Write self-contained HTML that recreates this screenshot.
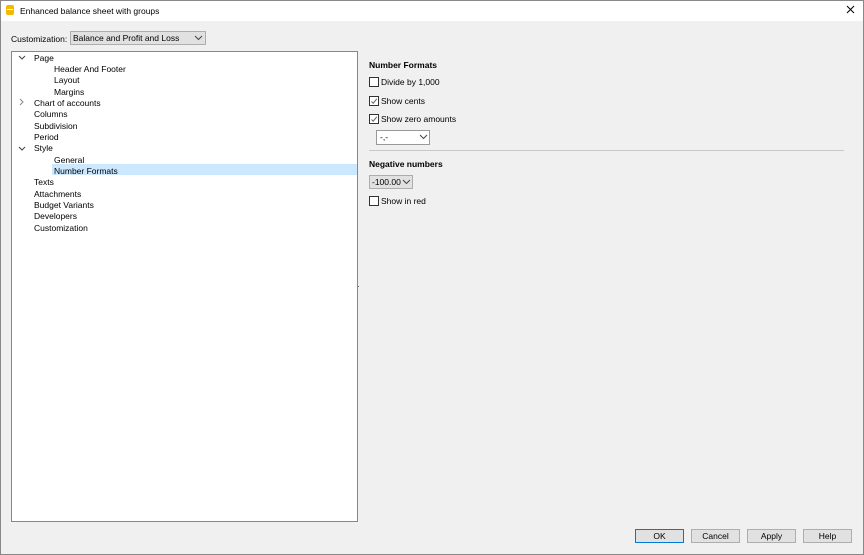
<!DOCTYPE html><html><head><style>
body{margin:0;width:864px;height:555px;overflow:hidden;font-family:"Liberation Sans",sans-serif;font-size:8.5px;color:#000;}
.win{position:absolute;left:0;top:0;width:864px;height:555px;box-shadow:inset 0 0 0 1px #888;background:#f0f0f0;}
.title{position:absolute;left:1px;top:1px;width:862px;height:20px;background:#fff;}
.a{position:absolute;white-space:nowrap;}
.tree{position:absolute;left:11px;top:51px;width:345px;height:469px;background:#fff;border:1px solid #828790;}
.cb{position:absolute;width:8px;height:8px;border:1px solid #333;background:#fff;}
.btn{position:absolute;top:529px;width:47px;height:12px;border:1px solid #adadad;background:#e1e1e1;text-align:center;line-height:12px;}
.dd{position:absolute;border:1px solid #adadad;background:#e1e1e1;}
.ck{position:absolute;}
</style></head><body><div class="win">
<div class="title"></div>
<div class="a" style="left:6px;top:5px;width:8px;height:10px;background:#f5b800;border-radius:2px"></div>
<div class="a" style="left:7px;top:9px;width:6px;height:1px;background:#fff"></div>
<div class="a" style="left:20px;top:6px">Enhanced balance sheet with groups</div>
<svg class="a" style="left:846px;top:5px" width="9" height="9"><path d="M1 1L8 8M8 1L1 8" stroke="#000" stroke-width="1"/></svg>
<div class="a" style="left:11px;top:34px">Customization:</div>
<div class="dd" style="left:70px;top:31px;width:134px;height:12px"><span class="a" style="left:2px;top:1px">Balance and Profit and Loss</span><svg class="a" style="left:123px;top:3px" width="9" height="6"><path d="M1 1L4.5 4.5L8 1" fill="none" stroke="#444"/></svg></div>
<div class="tree">
<div class="a" style="left:40px;top:112px;width:305px;height:11px;background:#cce8ff"></div>
<svg class="a" style="left:6px;top:3px" width="8" height="6"><path d="M1 1L4 4L7 1" fill="none" stroke="#444"/></svg>
<svg class="a" style="left:7px;top:46px" width="6" height="8"><path d="M1 1L4 4L1 7" fill="none" stroke="#888"/></svg>
<svg class="a" style="left:6px;top:94px" width="8" height="6"><path d="M1 1L4 4L7 1" fill="none" stroke="#444"/></svg>
<div class="a" style="left:22px;top:1px">Page</div>
<div class="a" style="left:42px;top:12px">Header And Footer</div>
<div class="a" style="left:42px;top:23px">Layout</div>
<div class="a" style="left:42px;top:35px">Margins</div>
<div class="a" style="left:22px;top:46px">Chart of accounts</div>
<div class="a" style="left:22px;top:57px">Columns</div>
<div class="a" style="left:22px;top:69px">Subdivision</div>
<div class="a" style="left:22px;top:80px">Period</div>
<div class="a" style="left:22px;top:91px">Style</div>
<div class="a" style="left:42px;top:103px">General</div>
<div class="a" style="left:42px;top:114px">Number Formats</div>
<div class="a" style="left:22px;top:125px">Texts</div>
<div class="a" style="left:22px;top:137px">Attachments</div>
<div class="a" style="left:22px;top:148px">Budget Variants</div>
<div class="a" style="left:22px;top:159px">Developers</div>
<div class="a" style="left:22px;top:171px">Customization</div>
</div>
<div class="a" style="left:369px;top:60px;font-weight:bold">Number Formats</div>
<div class="cb" style="left:369px;top:77px"></div><div class="a" style="left:381px;top:77px">Divide by 1,000</div>
<div class="cb" style="left:369px;top:96px"></div><svg class="ck" style="left:370px;top:97px" width="8" height="8"><path d="M1.5 4.5L3.2 6.2L6.8 1.8" fill="none" stroke="#666"/></svg><div class="a" style="left:381px;top:96px">Show cents</div>
<div class="cb" style="left:369px;top:114px"></div><svg class="ck" style="left:370px;top:115px" width="8" height="8"><path d="M1.5 4.5L3.2 6.2L6.8 1.8" fill="none" stroke="#666"/></svg><div class="a" style="left:381px;top:114px">Show zero amounts</div>
<div class="a" style="left:376px;top:130px;width:52px;height:13px;border:1px solid #999;background:#fff"><span class="a" style="left:3px;top:1px">-,-</span><svg class="a" style="left:42px;top:3px" width="9" height="6"><path d="M1 1L4.5 4.5L8 1" fill="none" stroke="#444"/></svg></div>
<div class="a" style="left:369px;top:150px;width:475px;height:1px;background:#c8c8c8"></div>
<div class="a" style="left:369px;top:159px;font-weight:bold">Negative numbers</div>
<div class="dd" style="left:369px;top:175px;width:42px;height:12px"><span class="a" style="left:2px;top:1px">-100.00</span><svg class="a" style="left:32px;top:3px" width="9" height="6"><path d="M1 1L4.5 4.5L8 1" fill="none" stroke="#444"/></svg></div>
<div class="cb" style="left:369px;top:196px"></div><div class="a" style="left:381px;top:196px">Show in red</div>
<div class="a" style="left:358px;top:286px;width:1px;height:1px;background:#666"></div>
<div class="btn" style="left:635px;border-color:#0078d7">OK</div>
<div class="btn" style="left:691px">Cancel</div>
<div class="btn" style="left:747px">Apply</div>
<div class="btn" style="left:803px">Help</div>
</div></body></html>
